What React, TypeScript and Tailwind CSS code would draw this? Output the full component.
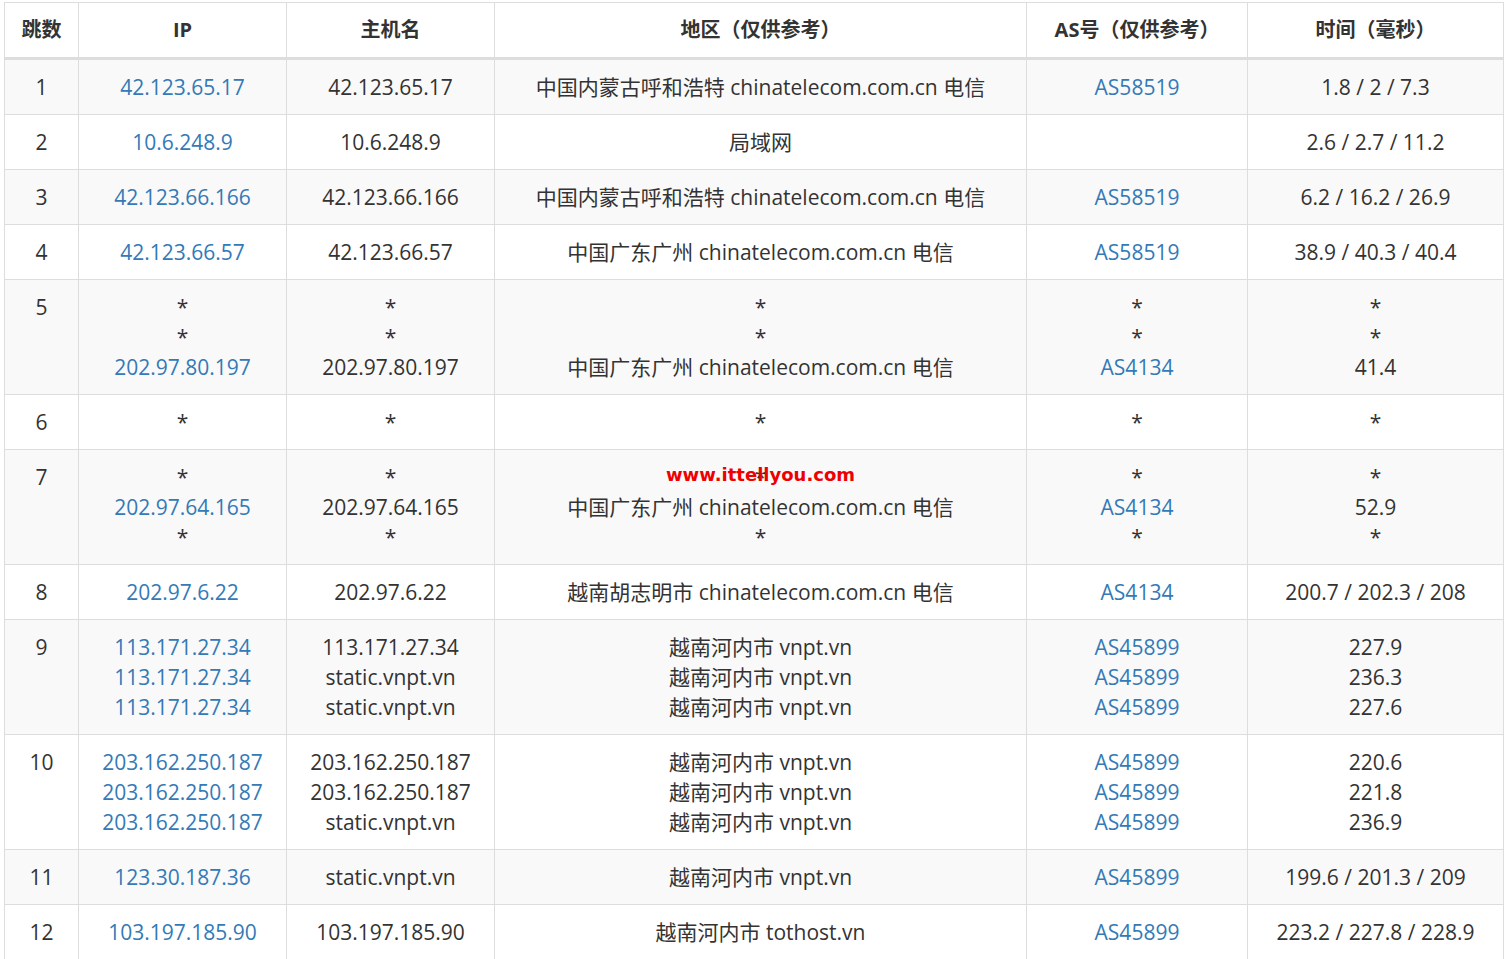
import React from "react";

type Row = { hop: string; ip: string[]; host: string[]; region: string[]; as: string[]; time: string[]; wm?: boolean };

const rows: Row[] = [
  { hop: "1", ip: ["42.123.65.17"], host: ["42.123.65.17"], region: ["中国内蒙古呼和浩特 chinatelecom.com.cn 电信"], as: ["AS58519"], time: ["1.8 / 2 / 7.3"] },
  { hop: "2", ip: ["10.6.248.9"], host: ["10.6.248.9"], region: ["局域网"], as: [""], time: ["2.6 / 2.7 / 11.2"] },
  { hop: "3", ip: ["42.123.66.166"], host: ["42.123.66.166"], region: ["中国内蒙古呼和浩特 chinatelecom.com.cn 电信"], as: ["AS58519"], time: ["6.2 / 16.2 / 26.9"] },
  { hop: "4", ip: ["42.123.66.57"], host: ["42.123.66.57"], region: ["中国广东广州 chinatelecom.com.cn 电信"], as: ["AS58519"], time: ["38.9 / 40.3 / 40.4"] },
  { hop: "5", ip: ["*", "*", "202.97.80.197"], host: ["*", "*", "202.97.80.197"], region: ["*", "*", "中国广东广州 chinatelecom.com.cn 电信"], as: ["*", "*", "AS4134"], time: ["*", "*", "41.4"] },
  { hop: "6", ip: ["*"], host: ["*"], region: ["*"], as: ["*"], time: ["*"] },
  { hop: "7", ip: ["*", "202.97.64.165", "*"], host: ["*", "202.97.64.165", "*"], region: ["*", "中国广东广州 chinatelecom.com.cn 电信", "*"], as: ["*", "AS4134", "*"], time: ["*", "52.9", "*"], wm: true },
  { hop: "8", ip: ["202.97.6.22"], host: ["202.97.6.22"], region: ["越南胡志明市 chinatelecom.com.cn 电信"], as: ["AS4134"], time: ["200.7 / 202.3 / 208"] },
  { hop: "9", ip: ["113.171.27.34", "113.171.27.34", "113.171.27.34"], host: ["113.171.27.34", "static.vnpt.vn", "static.vnpt.vn"], region: ["越南河内市 vnpt.vn", "越南河内市 vnpt.vn", "越南河内市 vnpt.vn"], as: ["AS45899", "AS45899", "AS45899"], time: ["227.9", "236.3", "227.6"] },
  { hop: "10", ip: ["203.162.250.187", "203.162.250.187", "203.162.250.187"], host: ["203.162.250.187", "203.162.250.187", "static.vnpt.vn"], region: ["越南河内市 vnpt.vn", "越南河内市 vnpt.vn", "越南河内市 vnpt.vn"], as: ["AS45899", "AS45899", "AS45899"], time: ["220.6", "221.8", "236.9"] },
  { hop: "11", ip: ["123.30.187.36"], host: ["static.vnpt.vn"], region: ["越南河内市 vnpt.vn"], as: ["AS45899"], time: ["199.6 / 201.3 / 209"] },
  { hop: "12", ip: ["103.197.185.90"], host: ["103.197.185.90"], region: ["越南河内市 tothost.vn"], as: ["AS45899"], time: ["223.2 / 227.8 / 228.9"] },
];

const Lines = ({ items, blue }: { items: string[]; blue?: boolean }) => (
  <>
    {items.map((t, i) => (
      <div key={i} className={"h-[30px] " + (blue && t !== "*" ? "text-[#337ab7]" : "")}>{t || "\u00a0"}</div>
    ))}
  </>
);

export default function App() {
  const td = "border border-[#ddd] px-2 pt-[12px] pb-[12px] align-top text-center leading-[30px]";
  const th = "border border-[#ddd] border-b-[3px] px-2 h-[56px] text-center font-bold";
  return (
    <div className="bg-white w-[1505px] h-[959px] overflow-hidden pl-[4px] pt-[2px]" style={{ fontFamily: '"Open Sans","Noto Sans CJK SC",sans-serif' }}>
      <table className="border-collapse text-[21px] text-[#333] table-fixed w-[1499px]">
        <colgroup>
          <col className="w-[74px]" />
          <col className="w-[208px]" />
          <col className="w-[208px]" />
          <col className="w-[532px]" />
          <col className="w-[221px]" />
          <col className="w-[256px]" />
        </colgroup>
        <thead>
          <tr>
            <th className={th + " text-[20px]"}>跳数</th>
            <th className={th + " text-[20px]"}>IP</th>
            <th className={th + " text-[20px]"}>主机名</th>
            <th className={th + " text-[20px]"}>地区（仅供参考）</th>
            <th className={th + " text-[20px]"}>AS号（仅供参考）</th>
            <th className={th + " text-[20px]"}>时间（毫秒）</th>
          </tr>
        </thead>
        <tbody>
          {rows.map((r, i) => (
            <tr key={i} className={i % 2 === 0 ? "bg-[#f9f9f9]" : "bg-white"}>
              <td className={td}><div className="h-[30px]">{r.hop}</div></td>
              <td className={td}><Lines items={r.ip} blue /></td>
              <td className={td}><Lines items={r.host} /></td>
              <td className={td + " relative"}>
                <Lines items={r.region} />
                {r.wm && (
                  <div className="absolute left-0 right-0 top-[10px] text-center text-[#e00] font-bold text-[18px] leading-[30px]" style={{ fontFamily: '"DejaVu Sans",sans-serif' }}>www.ittellyou.com</div>
                )}
              </td>
              <td className={td}><Lines items={r.as} blue /></td>
              <td className={td}><Lines items={r.time} /></td>
            </tr>
          ))}
        </tbody>
      </table>
    </div>
  );
}
